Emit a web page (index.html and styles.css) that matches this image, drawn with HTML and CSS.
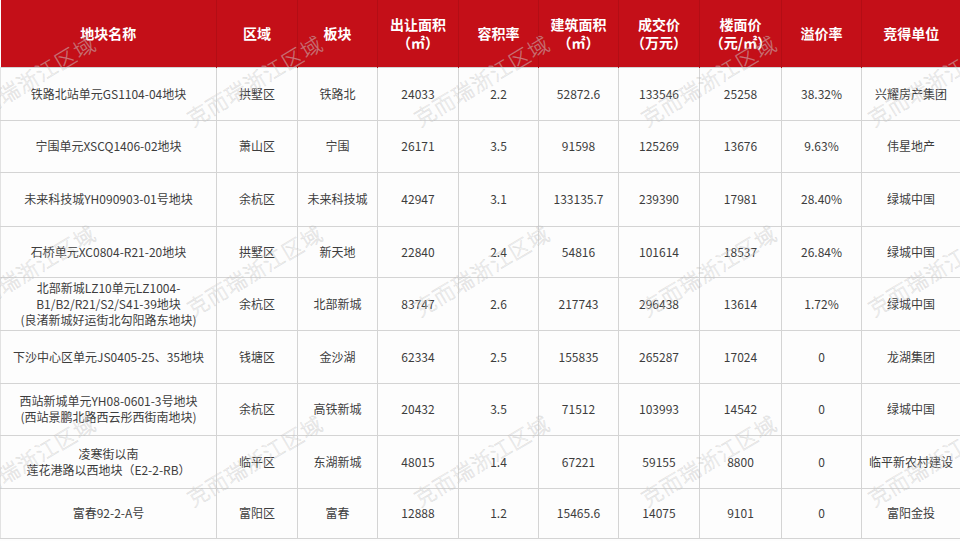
FILE: index.html
```html
<!DOCTYPE html>
<html lang="zh-CN">
<head>
<meta charset="utf-8">
<title>地块成交表</title>
<link rel="stylesheet" href="styles.css">
</head>
<body>
<div class="sheet">
  <table class="land">
    <colgroup>
      <col class="c1"><col class="c2"><col class="c3"><col class="c4"><col class="c5">
      <col class="c6"><col class="c7"><col class="c8"><col class="c9"><col class="c10">
    </colgroup>
    <thead>
      <tr>
        <th>地块名称</th>
        <th>区域</th>
        <th>板块</th>
        <th>出让面积<br>（㎡）</th>
        <th>容积率</th>
        <th>建筑面积<br>（㎡）</th>
        <th>成交价<br>（万元）</th>
        <th>楼面价<br>（元/㎡）</th>
        <th>溢价率</th>
        <th>竞得单位</th>
      </tr>
    </thead>
    <tbody>
      <tr class="r1">
        <td>铁路北站单元GS1104-04地块</td><td>拱墅区</td><td>铁路北</td><td>24033</td><td>2.2</td><td>52872.6</td><td>133546</td><td>25258</td><td>38.32%</td><td>兴耀房产集团</td>
      </tr>
      <tr class="r2">
        <td>宁围单元XSCQ1406-02地块</td><td>萧山区</td><td>宁围</td><td>26171</td><td>3.5</td><td>91598</td><td>125269</td><td>13676</td><td>9.63%</td><td>伟星地产</td>
      </tr>
      <tr class="r3">
        <td>未来科技城YH090903-01号地块</td><td>余杭区</td><td>未来科技城</td><td>42947</td><td>3.1</td><td>133135.7</td><td>239390</td><td>17981</td><td>28.40%</td><td>绿城中国</td>
      </tr>
      <tr class="r4">
        <td>石桥单元XC0804-R21-20地块</td><td>拱墅区</td><td>新天地</td><td>22840</td><td>2.4</td><td>54816</td><td>101614</td><td>18537</td><td>26.84%</td><td>绿城中国</td>
      </tr>
      <tr class="r5">
        <td>北部新城LZ10单元LZ1004-<br>B1/B2/R21/S2/S41-39地块<br>(良渚新城好运街北勾阳路东地块)</td><td>余杭区</td><td>北部新城</td><td>83747</td><td>2.6</td><td>217743</td><td>296438</td><td>13614</td><td>1.72%</td><td>绿城中国</td>
      </tr>
      <tr class="r6">
        <td>下沙中心区单元JS0405-25、35地块</td><td>钱塘区</td><td>金沙湖</td><td>62334</td><td>2.5</td><td>155835</td><td>265287</td><td>17024</td><td>0</td><td>龙湖集团</td>
      </tr>
      <tr class="r7">
        <td>西站新城单元YH08-0601-3号地块<br>(西站景鹏北路西云彤西街南地块)</td><td>余杭区</td><td>高铁新城</td><td>20432</td><td>3.5</td><td>71512</td><td>103993</td><td>14542</td><td>0</td><td>绿城中国</td>
      </tr>
      <tr class="r8">
        <td>凌寒街以南<br>莲花港路以西地块（E2-2-RB）</td><td>临平区</td><td>东湖新城</td><td>48015</td><td>1.4</td><td>67221</td><td>59155</td><td>8800</td><td>0</td><td>临平新农村建设</td>
      </tr>
      <tr class="r9">
        <td>富春92-2-A号</td><td>富阳区</td><td>富春</td><td>12888</td><td>1.2</td><td>15465.6</td><td>14075</td><td>9101</td><td>0</td><td>富阳金投</td>
      </tr>
    </tbody>
  </table>
  <div class="watermark" aria-hidden="true">
    <span>克而瑞浙江区域</span><span>克而瑞浙江区域</span><span>克而瑞浙江区域</span><span>克而瑞浙江区域</span><span>克而瑞浙江区域</span>
    <span>克而瑞浙江区域</span><span>克而瑞浙江区域</span><span>克而瑞浙江区域</span><span>克而瑞浙江区域</span><span>克而瑞浙江区域</span>
    <span>克而瑞浙江区域</span><span>克而瑞浙江区域</span><span>克而瑞浙江区域</span><span>克而瑞浙江区域</span><span>克而瑞浙江区域</span>
  </div>
</div>
</body>
</html>
```

FILE: styles.css
```css
html, body {
  margin: 0;
  padding: 0;
  background: #ffffff;
}

body {
  width: 960px;
  height: 541px;
  overflow: hidden;
  font-family: "Noto Sans CJK SC", "Noto Sans", sans-serif;
}

.sheet {
  position: relative;
  width: 960px;
  height: 541px;
  overflow: hidden;
  background: #fdfdfd;
}

.land {
  width: 960px;
  table-layout: fixed;
  border-collapse: collapse;
  border-spacing: 0;
}

.c1 { width: 216px; }
.c2 { width: 81px; }
.c3 { width: 80px; }
.c4 { width: 81px; }
.c5 { width: 80px; }
.c6 { width: 80px; }
.c7 { width: 81px; }
.c8 { width: 82px; }
.c9 { width: 80px; }
.c10 { width: 99px; }

.land thead tr {
  height: 67px;
  background: #c40f18;
}

.land th {
  padding: 0;
  color: #ffffff;
  font-size: 14px;
  font-weight: 700;
  line-height: 18px;
  text-align: center;
  vertical-align: middle;
  border-left: 1px solid #b30d15;
  border-right: 1px solid #b30d15;
}

.land th:first-child { border-left: none; }
.land th:last-child { border-right: none; }

.land td {
  padding: 0 4px;
  color: #3d3d3d;
  font-size: 12px;
  line-height: 16px;
  text-align: center;
  vertical-align: middle;
  border: 1px solid #d4d4d4;
  white-space: nowrap;
}

.land td:first-child { border-left: 1px solid #e2e2e2; }
.land td:last-child { border-right: 1px solid #e2e2e2; }

.r1 { height: 53px; }
.r2 { height: 52px; }
.r3 { height: 54px; }
.r4 { height: 51px; }
.r5 { height: 53px; }
.r6 { height: 53px; }
.r7 { height: 52px; }
.r8 { height: 53px; }
.r9 { height: 50px; }

.watermark {
  position: absolute;
  left: -86px;
  top: -15px;
  display: grid;
  grid-template-columns: repeat(5, 227px);
  grid-template-rows: repeat(3, 190px);
  pointer-events: none;
}

.watermark span {
  display: flex;
  align-items: center;
  justify-content: center;
  transform: rotate(-31deg);
  font-family: "Noto Sans CJK SC", sans-serif;
  font-size: 21px;
  font-weight: 300;
  letter-spacing: 1px;
  white-space: nowrap;
  color: rgba(255, 255, 255, 0.4);
  -webkit-text-stroke: 0.6px rgba(140, 140, 140, 0.28);
}
```
